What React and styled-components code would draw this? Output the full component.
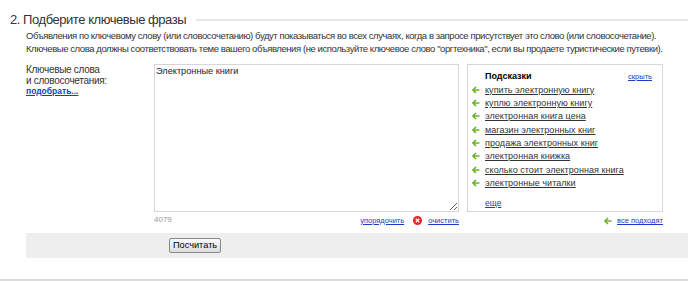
import React from "react";
import styled, { createGlobalStyle } from "styled-components";

const GlobalStyle = createGlobalStyle`
  body {
    margin: 0;
    background: #fff;
    font-family: "Liberation Sans", Arial, sans-serif;
    font-size: 10px;
    color: #333;
  }
`;

const suggestions = [
  "купить электронную книгу",
  "куплю электронную книгу",
  "электронная книга цена",
  "магазин электронных книг",
  "продажа электронных книг",
  "электронная книжка",
  "сколько стоит электронная книга",
  "электронные читалки",
];

const Arrow = () => (
  <svg width="8" height="8" viewBox="0 0 8 8">
    <path d="M4 1 L1 4 L4 7 M1 4 H7.5" stroke="#6cb32b" strokeWidth="1.6" fill="none" />
  </svg>
);

const ClearIcon = () => (
  <svg width="9" height="9" viewBox="0 0 9 9">
    <circle cx="4.5" cy="4.5" r="4.5" fill="#e3262a" />
    <path d="M2.8 2.8 L6.2 6.2 M6.2 2.8 L2.8 6.2" stroke="#fff" strokeWidth="1.3" />
  </svg>
);

const App = () => {
  return (
    <Page>
      <GlobalStyle />
      <Header>
        <Title>2. Подберите ключевые фразы</Title>
        <Rule />
      </Header>
      <Body>
        <Intro>
          Объявления по ключевому слову (или словосочетанию) будут показываться во всех случаях, когда в запросе присутствует это слово (или словосочетание).
          <br />
          Ключевые слова должны соответствовать теме вашего объявления (не используйте ключевое слово "оргтехника", если вы продаете туристические путевки).
        </Intro>
        <FormRow>
          <Label>
            Ключевые слова
            <br />
            и словосочетания:
            <br />
            <PickLink href="#">подобрать...</PickLink>
          </Label>
          <EditorCol>
            <Words defaultValue="Электронные книги" />
            <UnderRow>
              <Counter>4079</Counter>
              <Actions>
                <SmallLink href="#">упорядочить</SmallLink>
                <ClearIcon />
                <SmallLink href="#">очистить</SmallLink>
              </Actions>
            </UnderRow>
          </EditorCol>
          <HintsCol>
            <Hints>
              <HintsHead>
                <HintsTitle>Подсказки</HintsTitle>
                <SmallLink href="#">скрыть</SmallLink>
              </HintsHead>
              <HintList>
                {suggestions.map((s) => (
                  <HintItem key={s}>
                    <Arrow />
                    <HintLink href="#">{s}</HintLink>
                  </HintItem>
                ))}
              </HintList>
              <MoreLink href="#">еще</MoreLink>
            </Hints>
            <AllRow>
              <Arrow />
              <SmallLink href="#">все подходят</SmallLink>
            </AllRow>
          </HintsCol>
        </FormRow>
        <SubmitBar>
          <Button>Посчитать</Button>
        </SubmitBar>
      </Body>
      <BottomRule />
    </Page>
  );
};

export default App;

const Page = styled.div`
  width: 688px;
  height: 281px;
  position: relative;
  overflow: hidden;
`;

const Header = styled.div`
  display: flex;
  align-items: center;
  padding: 11px 0 0 10px;
  height: 17px;
`;

const Title = styled.h2`
  margin: 0;
  font-size: 13px;
  letter-spacing: -0.45px;
  font-weight: normal;
  line-height: 17px;
  color: #333;
  white-space: nowrap;
`;

const Rule = styled.div`
  flex: 1;
  height: 2px;
  margin-left: 10px;
  background: #e8e8e8;
`;

const Body = styled.div`
  padding-left: 26px;
`;

const Intro = styled.p`
  margin: 0;
  padding-top: 1px;
  font-size: 9.5px;
  line-height: 13px;
  letter-spacing: -0.42px;
  white-space: nowrap;
`;

const FormRow = styled.div`
  display: flex;
  margin-top: 9px;
`;

const Label = styled.div`
  width: 128px;
  padding-top: 1px;
  line-height: 10.5px;
  letter-spacing: -0.3px;
`;

const PickLink = styled.a`
  color: #1a3dc1;
  font-size: 8.5px;
  font-weight: bold;
  letter-spacing: 0;
  text-decoration: underline;
`;

const EditorCol = styled.div`
  width: 305px;
  display: flex;
  flex-direction: column;
`;

const Words = styled.textarea`
  box-sizing: border-box;
  width: 305px;
  height: 148px;
  margin: 0;
  padding: 1px;
  border: 1px solid #d6d6d6;
  font-family: "Liberation Sans", Arial, sans-serif;
  font-size: 9.2px;
  color: #222;
  resize: both;
  outline: none;
`;

const UnderRow = styled.div`
  display: flex;
  justify-content: space-between;
  align-items: center;
  height: 15px;
`;

const Counter = styled.span`
  color: #999;
  font-size: 8px;
`;

const Actions = styled.div`
  display: flex;
  align-items: center;
  gap: 6px;
  padding-top: 1px;
  svg {
    margin-left: 3px;
  }
`;

const SmallLink = styled.a`
  color: #1a3dc1;
  font-size: 7.5px;
  text-decoration: underline;
`;

const HintsCol = styled.div`
  margin-left: 8px;
  width: 196px;
  display: flex;
  flex-direction: column;
`;

const Hints = styled.div`
  box-sizing: border-box;
  height: 148px;
  border: 1px solid #d6d6d6;
  padding: 4px 10px 0 4px;
`;

const HintsHead = styled.div`
  display: flex;
  justify-content: space-between;
  align-items: center;
  padding-left: 13px;
  height: 14px;
`;

const HintsTitle = styled.span`
  font-size: 9px;
  font-weight: bold;
  color: #000;
`;

const HintList = styled.ul`
  list-style: none;
  margin: 0;
  padding: 0;
`;

const HintItem = styled.li`
  display: flex;
  align-items: center;
  gap: 5px;
  height: 13.33px;
  white-space: nowrap;
`;

const HintLink = styled.a`
  color: #333;
  font-size: 9px;
  letter-spacing: 0.05px;
  text-decoration: underline;
`;

const MoreLink = styled.a`
  display: inline-block;
  margin: 8px 0 0 13px;
  font-size: 8.5px;
  line-height: 10px;
  color: #1a3dc1;
  text-decoration: underline;
`;

const AllRow = styled.div`
  display: flex;
  justify-content: flex-end;
  align-items: center;
  gap: 5px;
  height: 15px;
  padding-top: 2px;
  box-sizing: border-box;
`;

const SubmitBar = styled.div`
  margin-top: 6px;
  height: 25px;
  background: #eeeeef;
  display: flex;
  align-items: center;
  padding-left: 143px;
`;

const Button = styled.button`
  height: 15px;
  padding: 0 3px;
  font-family: "Liberation Sans", Arial, sans-serif;
  font-size: 9.2px;
  line-height: 11px;
  color: #000;
  background: linear-gradient(#fafafa, #ddd);
  border: 1px solid #888;
  border-radius: 2px;
`;

const BottomRule = styled.div`
  position: absolute;
  left: 0;
  right: 0;
  bottom: 0;
  height: 2px;
  background: #dcdcdc;
`;
